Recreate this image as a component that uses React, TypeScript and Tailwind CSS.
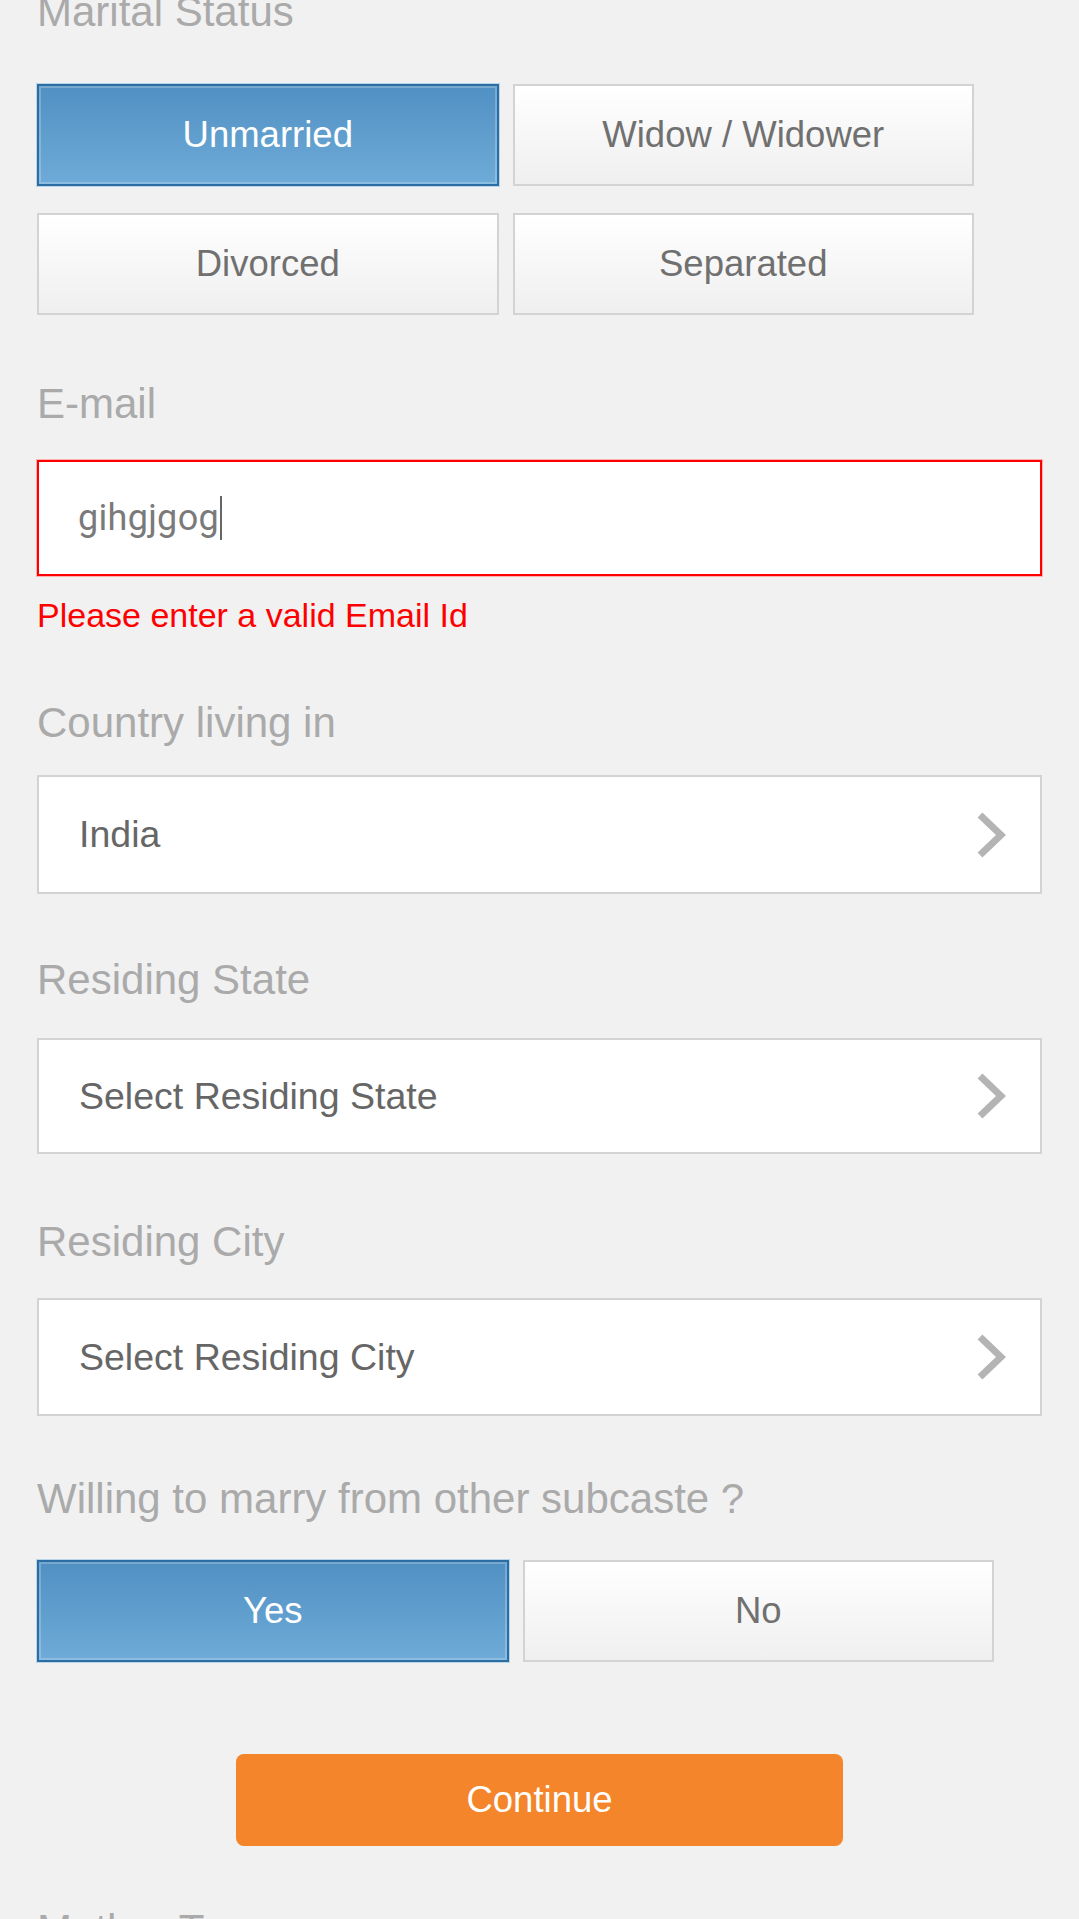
import React from "react";

const maritalOptions = ["Unmarried", "Widow / Widower", "Divorced", "Separated"];

function Label({ children, className = "" }: { children: React.ReactNode; className?: string }) {
  return (
    <div className={`block text-[42px] leading-[48px] text-[#aaaaaa] ${className}`}>
      {children}
    </div>
  );
}

function ToggleButton({ label, active }: { label: string; active?: boolean }) {
  return (
    <button
      type="button"
      className={
        active
          ? "flex h-[102px] items-center justify-center border-2 border-[#2c6ea4] bg-[linear-gradient(to_bottom,#5190c3,#6eabd8)] text-[36.5px] text-white shadow-[inset_0_0_0_2px_rgba(255,255,255,0.22),0_0_0_1px_#b8d5ea]"
          : "flex h-[102px] items-center justify-center border-2 border-[#d3d3d3] bg-[linear-gradient(to_bottom,#ffffff,#efefef)] text-[36.5px] text-[#707070]"
      }
    >
      {label}
    </button>
  );
}

function Chevron() {
  return (
    <svg width="30" height="46" viewBox="0 0 30 46" className="blur-[0.7px]">
      <path d="M4 3 L25 23 L4 43" fill="none" stroke="#b4b4b4" strokeWidth="7" />
    </svg>
  );
}

function SelectBox({ value, className = "" }: { value: string; className?: string }) {
  return (
    <div
      className={`flex items-center justify-between border-2 border-[#d3d3d3] bg-white pl-[40px] pr-[34px] ${className}`}
    >
      <span className="text-[37.5px] text-[#666666]">{value}</span>
      <Chevron />
    </div>
  );
}

export default function App() {
  return (
    <div className="h-screen overflow-hidden bg-[#f1f1f1] font-['Liberation_Sans',Arial,sans-serif]">
      <div className="-mt-[12px] px-[37px]">
        <Label>Marital Status</Label>
        <div className="mt-[48px] grid w-[937px] grid-cols-2 gap-x-[14px] gap-y-[27px]">
          {maritalOptions.map((o) => (
            <ToggleButton key={o} label={o} active={o === "Unmarried"} />
          ))}
        </div>

        <Label className="mt-[65px]">E-mail</Label>
        <div className="mt-[32px] flex h-[116px] items-center border-2 border-[#ff0000] bg-white pl-[39px] shadow-[0_0_0_1px_#ffb0b0]">
          <span className="font-['Roboto',sans-serif] text-[36px] tracking-[0.3px] text-[#7a7a7a]">
            gihgjgog
          </span>
          <span className="ml-[1px] h-[44px] w-[2px] bg-[#666666]" />
        </div>
        <div className="mt-[19px] text-[34px] leading-[40px] text-[#ff0000]">
          Please enter a valid Email Id
        </div>

        <Label className="mt-[64px]">Country living in</Label>
        <SelectBox value="India" className="mt-[28px] h-[119px]" />

        <Label className="mt-[62px]">Residing State</Label>
        <SelectBox value="Select Residing State" className="mt-[34px] h-[116px]" />

        <Label className="mt-[64px]">Residing City</Label>
        <SelectBox value="Select Residing City" className="mt-[32px] h-[118px]" />

        <Label className="mt-[59px]">Willing to marry from other subcaste ?</Label>
        <div className="mt-[37px] grid w-[957px] grid-cols-2 gap-x-[14px]">
          <ToggleButton label="Yes" active />
          <ToggleButton label="No" />
        </div>

        <button
          type="button"
          className="mx-auto mt-[92px] flex h-[92px] w-[607px] items-center justify-center rounded-[8px] bg-[#f4852a] text-[36.5px] text-white"
        >
          Continue
        </button>

        <Label className="mt-[60px]">Mother Tongue</Label>
      </div>
    </div>
  );
}
